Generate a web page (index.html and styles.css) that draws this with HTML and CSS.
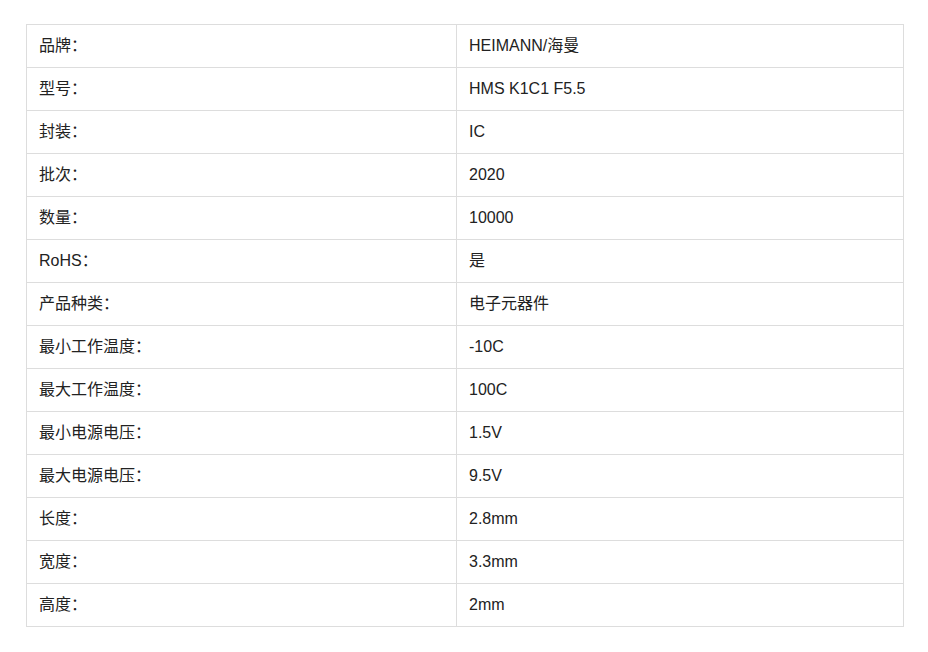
FILE: index.html
```html
<!DOCTYPE html>
<html lang="zh">
<head>
<meta charset="utf-8">
<title>参数</title>
<link rel="stylesheet" href="styles.css">
</head>
<body>
<div class="page">
<table class="spec">
<colgroup><col class="key-col"><col class="val-col"></colgroup>
<tbody>
<tr><td>品牌：</td><td>HEIMANN/海曼</td></tr>
<tr><td>型号：</td><td>HMS K1C1 F5.5</td></tr>
<tr><td>封装：</td><td>IC</td></tr>
<tr><td>批次：</td><td>2020</td></tr>
<tr><td>数量：</td><td>10000</td></tr>
<tr><td>RoHS：</td><td>是</td></tr>
<tr><td>产品种类：</td><td>电子元器件</td></tr>
<tr><td>最小工作温度：</td><td>-10C</td></tr>
<tr><td>最大工作温度：</td><td>100C</td></tr>
<tr><td>最小电源电压：</td><td>1.5V</td></tr>
<tr><td>最大电源电压：</td><td>9.5V</td></tr>
<tr><td>长度：</td><td>2.8mm</td></tr>
<tr><td>宽度：</td><td>3.3mm</td></tr>
<tr><td>高度：</td><td>2mm</td></tr>
</tbody>
</table>
</div>
</body>
</html>
```
FILE: styles.css
```css
html, body {
  margin: 0;
  padding: 0;
  background: #fff;
}
.page {
  padding: 24px 0 0 26px;
}
.spec {
  border-collapse: collapse;
  table-layout: fixed;
  width: 878px;
  font-family: "Liberation Sans", Arial, "Noto Sans CJK SC", sans-serif;
  font-size: 16px;
  color: #222;
}
.key-col {
  width: 430px;
}
.spec td {
  border: 1px solid #dddddd;
  height: 43px;
  padding: 0 12px;
  box-sizing: border-box;
  vertical-align: middle;
  line-height: 20px;
}
```
